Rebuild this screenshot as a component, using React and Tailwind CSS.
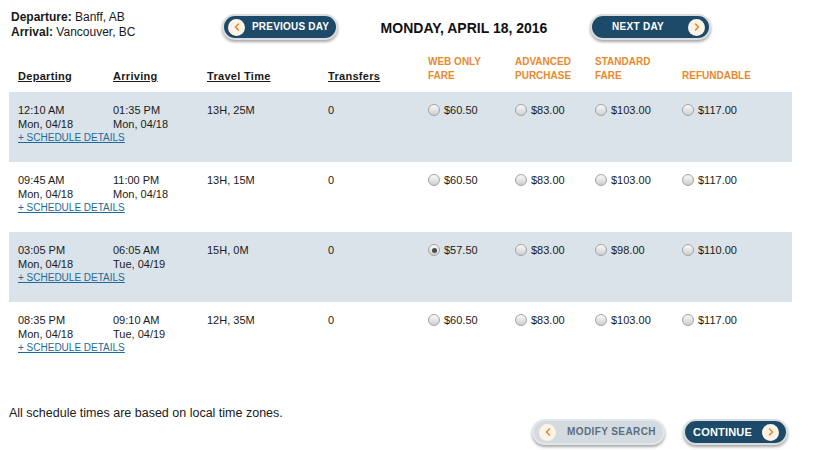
import { ChevronLeft, ChevronRight } from "lucide-react";

const trips = [
  { dep: "12:10 AM", depDate: "Mon, 04/18", arr: "01:35 PM", arrDate: "Mon, 04/18", time: "13H, 25M", transfers: "0", fares: ["$60.50", "$83.00", "$103.00", "$117.00"], shaded: true },
  { dep: "09:45 AM", depDate: "Mon, 04/18", arr: "11:00 PM", arrDate: "Mon, 04/18", time: "13H, 15M", transfers: "0", fares: ["$60.50", "$83.00", "$103.00", "$117.00"] },
  { dep: "03:05 PM", depDate: "Mon, 04/18", arr: "06:05 AM", arrDate: "Tue, 04/19", time: "15H, 0M", transfers: "0", fares: ["$57.50", "$83.00", "$98.00", "$110.00"], shaded: true, selected: 0 },
  { dep: "08:35 PM", depDate: "Mon, 04/18", arr: "09:10 AM", arrDate: "Tue, 04/19", time: "12H, 35M", transfers: "0", fares: ["$60.50", "$83.00", "$103.00", "$117.00"] },
];

const cols = "grid grid-cols-[95px_94px_121px_100px_87px_80px_87px_1fr]";

function Radio({ checked }) {
  return (
    <span className="w-[12px] h-[12px] rounded-full border border-[#a3a3a3] bg-gradient-to-b from-[#fafafa] to-[#cfcfcf] flex items-center justify-center shrink-0">
      {checked && <span className="w-[5px] h-[5px] rounded-full bg-[#4a4a4a]"></span>}
    </span>
  );
}

function Bubble({ dir }) {
  const Icon = dir === "left" ? ChevronLeft : ChevronRight;
  return (
    <span className="w-[17px] h-[17px] rounded-full bg-[#fdf3e6] flex items-center justify-center shrink-0">
      <Icon size={12} strokeWidth={3} className="text-[#e0862b]" />
    </span>
  );
}

export default function App() {
  return (
    <div className="w-[827px] h-[450px] bg-white text-[#1a1a1a] font-['Liberation_Sans',Arial,sans-serif] text-[11px] leading-[14px]">
      {/* trip summary + day navigation */}
      <div className="flex items-start pl-[11px] pt-[10px]">
        <div className="w-[211px] text-[12px] leading-[15px]">
          <div><span className="font-bold">Departure:</span> Banff, AB</div>
          <div><span className="font-bold">Arrival:</span> Vancouver, BC</div>
        </div>
        <div className="mt-[4px]">
          <div className="h-[26px] w-[116px] rounded-full border-2 border-[#d9dde0] shadow-[0_2px_3px_rgba(0,0,0,0.35)] bg-[#1c4a68] flex items-center pl-[4px] gap-[7px] text-white">
            <Bubble dir="left" />
            <span className="text-[10px] font-bold tracking-[0.2px] leading-none">PREVIOUS DAY</span>
          </div>
        </div>
        <div className="w-[252px] text-center text-[14px] font-bold text-[#111] mt-[10px] leading-[16px]">MONDAY, APRIL 18, 2016</div>
        <div className="mt-[4px]">
          <div className="h-[26px] w-[121px] rounded-full border-2 border-[#d9dde0] shadow-[0_2px_3px_rgba(0,0,0,0.35)] bg-[#1c4a68] flex items-center justify-between pl-[20px] pr-[4px] text-white">
            <span className="text-[10px] font-bold tracking-[0.3px] leading-none">NEXT DAY</span>
            <Bubble dir="right" />
          </div>
        </div>
      </div>

      {/* column headings */}
      <div className={`${cols} pl-[18px] mt-[15px] items-end font-bold`}>
        <div className="underline tracking-[0.3px]">Departing</div>
        <div className="underline tracking-[0.3px]">Arriving</div>
        <div className="underline tracking-[0.3px]">Travel Time</div>
        <div className="underline tracking-[0.3px]">Transfers</div>
        <div className="text-[10px] text-[#e8892b]">WEB ONLY<br />FARE</div>
        <div className="text-[10px] text-[#e8892b]">ADVANCED<br />PURCHASE</div>
        <div className="text-[10px] text-[#e8892b]">STANDARD<br />FARE</div>
        <div className="text-[10px] text-[#e8892b]">REFUNDABLE</div>
      </div>

      {/* schedule rows */}
      <div className="mt-[9px] w-[792px]">
        {trips.map((t, i) => (
          <div key={i} className={`${cols} ml-[9px] pl-[9px] h-[70px] pt-[11px] ${t.shaded ? "bg-[#dae3e9]" : "bg-white"}`}>
            <div>
              <div>{t.dep}</div>
              <div>{t.depDate}</div>
              <a className="block whitespace-nowrap text-[10px] text-[#1d6a99] underline">+ SCHEDULE DETAILS</a>
            </div>
            <div>
              <div>{t.arr}</div>
              <div>{t.arrDate}</div>
            </div>
            <div>{t.time}</div>
            <div>{t.transfers}</div>
            {t.fares.map((f, j) => (
              <div key={j} className="flex items-center gap-[4px] h-[14px]">
                <Radio checked={t.selected === j} />
                <span>{f}</span>
              </div>
            ))}
          </div>
        ))}
      </div>

      {/* footer */}
      <div className="flex items-start justify-between pl-[9px] w-[788px] mt-[33px]">
        <div className="text-[12.5px] leading-[16px]">All schedule times are based on local time zones.</div>
        <div className="flex gap-[18px] mt-[14px]">
          <div className="h-[26px] w-[133px] rounded-full border-2 border-[#e4e7ea] shadow-[0_2px_3px_rgba(0,0,0,0.35)] bg-[#d3dbe1] text-[#5b6e7e] flex items-center pl-[5px] gap-[11px]">
            <Bubble dir="left" />
            <span className="text-[10px] font-bold tracking-[0.4px] leading-none">MODIFY SEARCH</span>
          </div>
          <div className="h-[26px] w-[105px] rounded-full border-2 border-[#d9dde0] shadow-[0_2px_3px_rgba(0,0,0,0.35)] bg-[#1c4a68] text-white flex items-center justify-between pl-[8px] pr-[7px]">
            <span className="text-[11px] font-bold tracking-[0.2px] leading-none">CONTINUE</span>
            <Bubble dir="right" />
          </div>
        </div>
      </div>
    </div>
  );
}
